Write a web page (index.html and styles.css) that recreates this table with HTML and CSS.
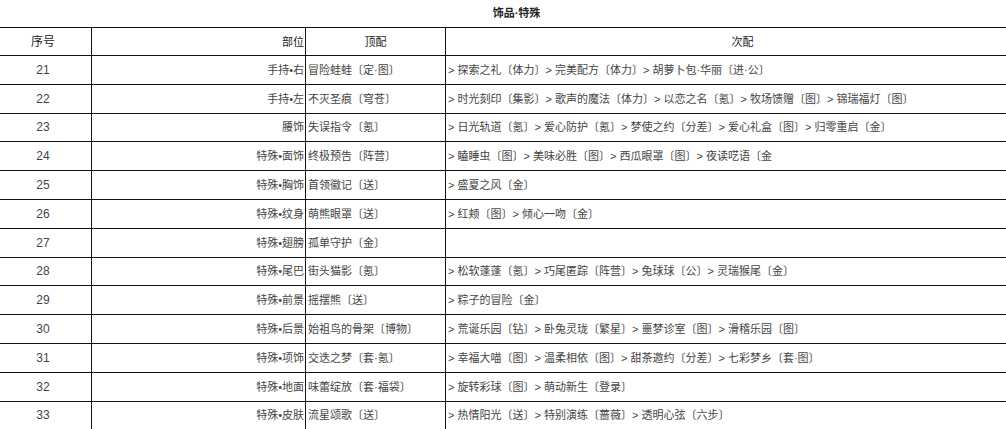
FILE: index.html
```html
<!DOCTYPE html>
<html lang="zh">
<head>
<meta charset="utf-8">
<title>饰品·特殊</title>
<link rel="stylesheet" href="styles.css">
</head>
<body>
<div class="sheet">
  <div class="title">饰品·特殊</div>
  <table class="grid">
    <colgroup>
      <col class="c-no">
      <col class="c-part">
      <col class="c-top">
      <col class="c-sub">
    </colgroup>
    <thead>
      <tr><th class="no">序号</th><th class="part">部位</th><th class="top">顶配</th><th class="sub">次配</th></tr>
    </thead>
    <tbody>
      <tr><td class="no">21</td><td class="part">手持•右</td><td class="top">冒险蛙蛙〔定·图〕</td><td class="sub">&gt; 探索之礼〔体力〕&gt; 完美配方〔体力〕&gt; 胡萝卜包·华丽〔进·公〕</td></tr>
      <tr><td class="no">22</td><td class="part">手持•左</td><td class="top">不灭圣痕〔穹苍〕</td><td class="sub">&gt; 时光刻印〔集影〕&gt; 歌声的魔法〔体力〕&gt; 以恋之名〔氪〕&gt; 牧场馈赠〔图〕&gt; 锦瑞福灯〔图〕</td></tr>
      <tr><td class="no">23</td><td class="part">腰饰</td><td class="top">失误指令〔氪〕</td><td class="sub">&gt; 日光轨道〔氪〕&gt; 爱心防护〔氪〕&gt; 梦使之约〔分差〕&gt; 爱心礼盒〔图〕&gt; 归零重启〔金〕</td></tr>
      <tr><td class="no">24</td><td class="part">特殊•面饰</td><td class="top">终极预告〔阵营〕</td><td class="sub">&gt; 瞌睡虫〔图〕&gt; 美味必胜〔图〕&gt; 西瓜眼罩〔图〕&gt; 夜读呓语〔金</td></tr>
      <tr><td class="no">25</td><td class="part">特殊•胸饰</td><td class="top">首领徽记〔送〕</td><td class="sub">&gt; 盛夏之风〔金〕</td></tr>
      <tr><td class="no">26</td><td class="part">特殊•纹身</td><td class="top">萌熊眼罩〔送〕</td><td class="sub">&gt; 红颊〔图〕&gt; 倾心一吻〔金〕</td></tr>
      <tr><td class="no">27</td><td class="part">特殊•翅膀</td><td class="top">孤单守护〔金〕</td><td class="sub"></td></tr>
      <tr><td class="no">28</td><td class="part">特殊•尾巴</td><td class="top">街头猫影〔氪〕</td><td class="sub">&gt; 松软蓬蓬〔氪〕&gt; 巧尾匿踪〔阵营〕&gt; 兔球球〔公〕&gt; 灵瑞猴尾〔金〕</td></tr>
      <tr><td class="no">29</td><td class="part">特殊•前景</td><td class="top">摇摆熊〔送〕</td><td class="sub">&gt; 粽子的冒险〔金〕</td></tr>
      <tr><td class="no">30</td><td class="part">特殊•后景</td><td class="top">始祖鸟的骨架〔博物〕</td><td class="sub">&gt; 荒诞乐园〔钻〕&gt; 卧兔灵珑〔繁星〕&gt; 噩梦诊室〔图〕&gt; 滑稽乐园〔图〕</td></tr>
      <tr><td class="no">31</td><td class="part">特殊•项饰</td><td class="top">交迭之梦〔套·氪〕</td><td class="sub">&gt; 幸福大喵〔图〕&gt; 温柔相依〔图〕&gt; 甜茶邀约〔分差〕&gt; 七彩梦乡〔套·图〕</td></tr>
      <tr><td class="no">32</td><td class="part">特殊•地面</td><td class="top">味蕾绽放〔套·福袋〕</td><td class="sub">&gt; 旋转彩球〔图〕&gt; 萌动新生〔登录〕</td></tr>
      <tr><td class="no">33</td><td class="part">特殊•皮肤</td><td class="top">流星颂歌〔送〕</td><td class="sub">&gt; 热情阳光〔送〕&gt; 特别演练〔蔷薇〕&gt; 透明心弦〔六步〕</td></tr>
    </tbody>
  </table>
</div>
</body>
</html>
```

FILE: styles.css
```css
html, body {
  margin: 0;
  padding: 0;
  background: #ffffff;
}

body {
  width: 1006px;
  height: 429px;
  overflow: hidden;
  font-family: "Liberation Sans", "Noto Sans CJK SC", sans-serif;
  font-size: 11px;
  color: #444;
}

.sheet {
  width: 1045px;
  margin-left: -6px;
}

.title {
  height: 27px;
  line-height: 27px;
  text-align: center;
  font-weight: bold;
  color: #222;
}

.grid {
  width: 1045px;
  border-collapse: collapse;
  table-layout: fixed;
}

.c-no { width: 97px; }
.c-part { width: 214px; }
.c-top { width: 140px; }
.c-sub { width: 594px; }

.grid th,
.grid td {
  border: 1px solid #111;
  height: 27.8px;
  padding: 0 2px;
  white-space: nowrap;
  overflow: hidden;
  line-height: 16px;
}

.grid th {
  font-weight: normal;
  color: #1a1a1a;
  height: 27px;
}

.grid th.no, .grid td.no { text-align: center; font-size: 12px; }
.grid th.part, .grid td.part { text-align: right; padding-right: 1px; }
.grid th.top { text-align: center; }
.grid td.top { text-align: left; padding-left: 2px; }
.grid th.sub { text-align: center; }
.grid td.sub { text-align: left; padding-left: 2px; }
```
